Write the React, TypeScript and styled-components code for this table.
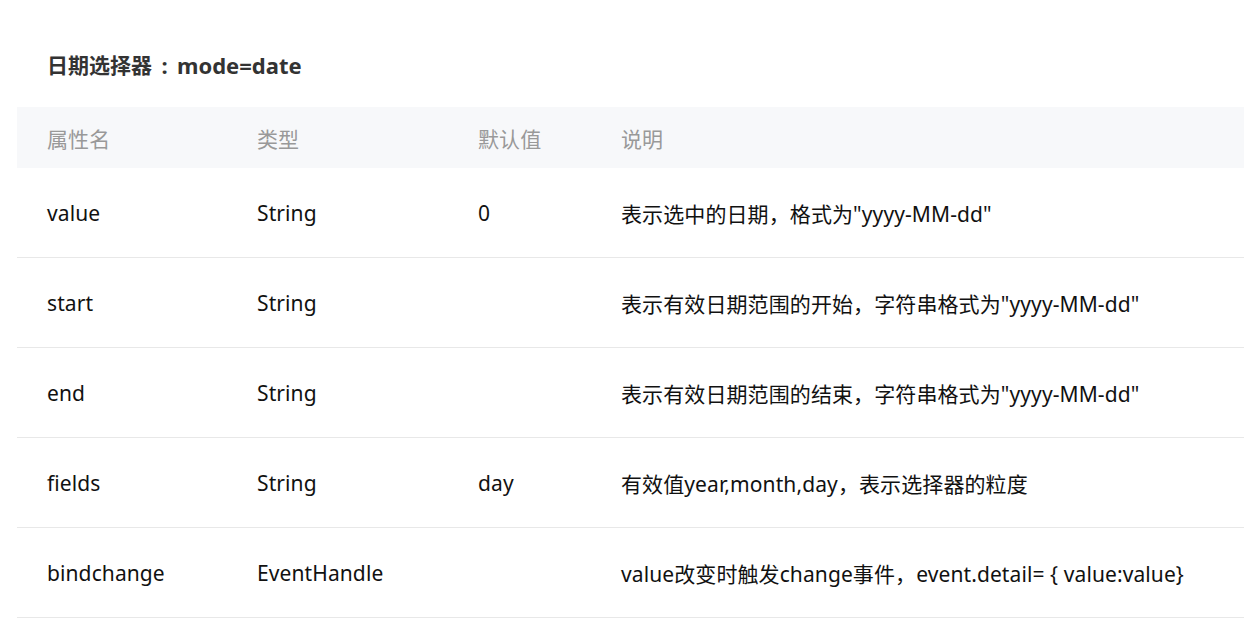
import React from 'react';
import styled, {createGlobalStyle} from 'styled-components';

const GlobalStyle = createGlobalStyle`
  body {
    margin: 0;
    background: #fff;
    font-family: "Noto Sans", "Noto Sans CJK SC", sans-serif;
  }
`;

const Page = styled.div`
  padding: 0 0 0 17px;
  overflow: hidden;
`;

const Title = styled.h3`
  margin: 0;
  padding: 50px 0 27px 30px;
  font-size: 21px;
  font-weight: bold;
  line-height: 30px;
  color: #333;
  display: flex;
  align-items: center;
`;

const Colon = styled.span`
  display: inline-block;
  width: 25px;
  text-align: center;
  font-size: 22px;
`;

const Mode = styled.span`
  font-size: 22px;
`;

const Table = styled.div`
  width: 1240px;
`;

const Row = styled.div<{head?: boolean}>`
  display: grid;
  grid-template-columns: 210px 221px 143px 1fr;
  align-items: center;
  padding-left: 30px;
  height: ${p => (p.head ? '61px' : '89px')};
  background: ${p => (p.head ? '#f7f8fa' : '#fff')};
  border-bottom: ${p => (p.head ? 'none' : '1px solid #e8e8e8')};
  font-size: 21px;
  letter-spacing: 0.1px;
  color: ${p => (p.head ? '#999' : '#111')};
`;

const Cell = styled.div`
  white-space: nowrap;
`;

const rows = [
  ['value', 'String', '0', '表示选中的日期，格式为"yyyy-MM-dd"'],
  ['start', 'String', '', '表示有效日期范围的开始，字符串格式为"yyyy-MM-dd"'],
  ['end', 'String', '', '表示有效日期范围的结束，字符串格式为"yyyy-MM-dd"'],
  ['fields', 'String', 'day', '有效值year,month,day，表示选择器的粒度'],
  ['bindchange', 'EventHandle', '', 'value改变时触发change事件，event.detail= { value:value}'],
];

const App = () => (
  <Page>
    <GlobalStyle />
    <Title>
      日期选择器<Colon>:</Colon><Mode>mode=date</Mode>
    </Title>
    <Table>
      <Row head>
        <Cell>属性名</Cell>
        <Cell>类型</Cell>
        <Cell>默认值</Cell>
        <Cell>说明</Cell>
      </Row>
      {rows.map((row, id) => (
        <Row key={id}>
          {row.map((text, i) => <Cell key={i}>{text}</Cell>)}
        </Row>
      ))}
    </Table>
  </Page>
);

export default App;
